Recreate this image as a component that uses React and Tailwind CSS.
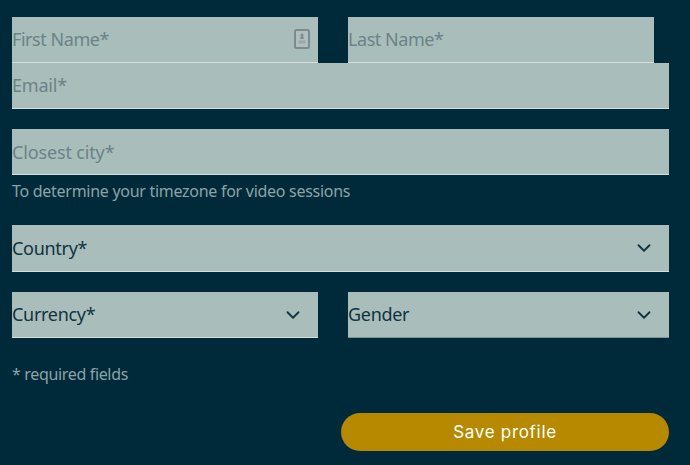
import { ChevronDown } from 'lucide-react'

const FONT = 'font-["Noto_Sans"]'

function Input({ label, className = '', textClass = 'tracking-[-0.45px]', children }) {
  return (
    <div className={`h-[46px] bg-[#a9bdba] border-b border-[#d5dfdd] flex items-center justify-between ${className}`}>
      <span className={`text-[18px] text-[#6b8388] ${textClass}`}>{label}</span>
      {children}
    </div>
  )
}

function Select({ label, className = '', border = 'border-[#d5dfdd]' }) {
  return (
    <div className={`h-[46px] bg-[#a9bdba] border-b ${border} flex items-center justify-between pr-[14px] ${className}`}>
      <span className="text-[18px] tracking-[-0.3px] text-[#0f3442]">{label}</span>
      <ChevronDown size={22} strokeWidth={2} className="text-[#0f3442]" />
    </div>
  )
}

function ContactIcon() {
  return (
    <svg width="16" height="20" viewBox="0 0 16 20" className="mr-[8px] mb-[1px]">
      <rect x="1" y="1" width="14" height="18" rx="1.5" fill="#b0bfbd" stroke="#7c8b8c" strokeWidth="2" />
      <path d="M8 4.5a1.5 1.5 0 0 1 1 2.6l1 3H6l1-3a1.5 1.5 0 0 1 1-2.6z" fill="#7c8b8c" />
      <rect x="4.5" y="11.5" width="7" height="3" fill="#98a8a8" />
    </svg>
  )
}

export default function App() {
  return (
    <div className={`w-[690px] h-[465px] overflow-hidden bg-[#002a3a] pt-[17px] pl-[12px] pr-[21px] ${FONT}`}>
      <div className="flex gap-[30px]">
        <Input label="First Name*" className="w-[306px]"><ContactIcon /></Input>
        <Input label="Last Name*" className="w-[306px]" />
      </div>
      <Input label="Email*" textClass="tracking-[-0.2px]" />
      <Input label="Closest city*" textClass="tracking-[-0.15px] pt-[1px]" className="mt-[20px]" />
      <p className="mt-[6px] h-[20px] leading-[20px] text-[16px] tracking-[-0.28px] text-[#8ba3a5]">To determine your timezone for video sessions</p>
      <Select label="Country*" className="mt-[24px] !h-[47px]" />
      <div className="flex gap-[30px] mt-[20px]">
        <Select label="Currency*" className="w-[306px]" />
        <Select label="Gender" className="flex-1" border="border-[#7f9493]" />
      </div>
      <p className="mt-[26px] h-[20px] leading-[20px] text-[16px] tracking-[-0.34px] text-[#8ba3a5]">* required fields</p>
      <div className="flex justify-end mt-[29px]">
        <button className="w-[328px] h-[38px] pt-[1px] rounded-full bg-[#b68900] text-white text-[17px] tracking-[0.7px] font-normal font-['Inter']">Save profile</button>
      </div>
    </div>
  )
}
